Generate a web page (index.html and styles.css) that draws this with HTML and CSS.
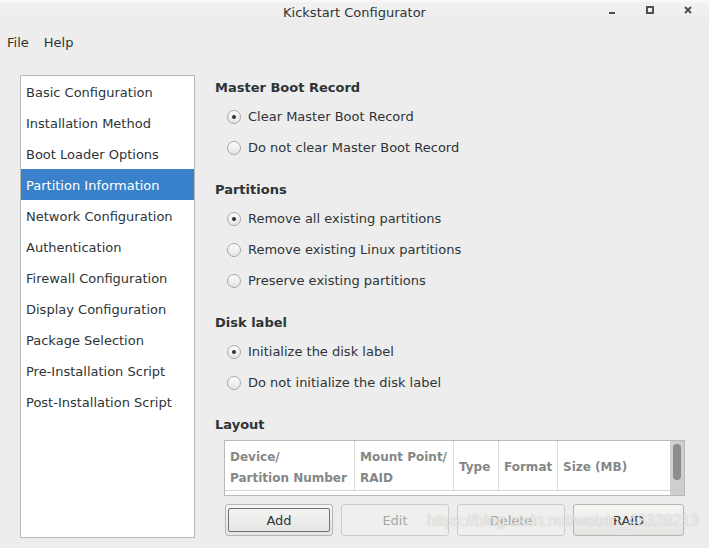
FILE: index.html
```html
<!DOCTYPE html>
<html>
<head>
<meta charset="utf-8">
<link rel="stylesheet" href="styles.css">
</head>
<body>
<div class="window">
  <div class="titlebar">
    <div class="title">Kickstart Configurator</div>
    <div class="controls">
      <svg class="ctl" width="8" height="8" viewBox="0 0 8 8"><rect x="1" y="6" width="6" height="2" fill="#4b5152"/></svg>
      <svg class="ctl" width="8" height="8" viewBox="0 0 8 8"><rect x="1" y="1" width="6" height="6" fill="none" stroke="#4b5152" stroke-width="2"/></svg>
      <svg class="ctl" width="8" height="8" viewBox="0 0 8 8"><path d="M1 1 L7 7 M7 1 L1 7" stroke="#4b5152" stroke-width="2"/></svg>
    </div>
  </div>
  <div class="menubar">
    <span class="menu">File</span>
    <span class="menu">Help</span>
  </div>
  <div class="main">
    <ul class="sidebar">
      <li>Basic Configuration</li>
      <li>Installation Method</li>
      <li>Boot Loader Options</li>
      <li class="selected">Partition Information</li>
      <li>Network Configuration</li>
      <li>Authentication</li>
      <li>Firewall Configuration</li>
      <li>Display Configuration</li>
      <li>Package Selection</li>
      <li>Pre-Installation Script</li>
      <li>Post-Installation Script</li>
    </ul>
    <div class="content">
      <section class="group">
        <h3>Master Boot Record</h3>
        <div class="radio"><span class="dot on"></span>Clear Master Boot Record</div>
        <div class="radio"><span class="dot"></span>Do not clear Master Boot Record</div>
      </section>
      <section class="group">
        <h3>Partitions</h3>
        <div class="radio"><span class="dot on"></span>Remove all existing partitions</div>
        <div class="radio"><span class="dot"></span>Remove existing Linux partitions</div>
        <div class="radio"><span class="dot"></span>Preserve existing partitions</div>
      </section>
      <section class="group">
        <h3>Disk label</h3>
        <div class="radio"><span class="dot on"></span>Initialize the disk label</div>
        <div class="radio"><span class="dot"></span>Do not initialize the disk label</div>
      </section>
      <section class="group layout">
        <h3>Layout</h3>
        <div class="table">
          <div class="thead">
            <div class="th c1">Device/<br>Partition Number</div>
            <div class="th c2">Mount Point/<br>RAID</div>
            <div class="th c3">Type</div>
            <div class="th c4">Format</div>
            <div class="th c5">Size (MB)</div>
          </div>
          <div class="scroll"><div class="thumb"></div></div>
        </div>
        <div class="buttons">
          <button class="btn focus"><span>Add</span></button>
          <button class="btn disabled"><span>Edit</span></button>
          <button class="btn disabled"><span>Delete</span></button>
          <button class="btn wide"><span>RAID</span></button>
        </div>
      </section>
    </div>
  </div>
  <div class="watermark">https://blog.csdn.net/weixin_43328213</div>
</div>
</body>
</html>
```
FILE: styles.css
```css
* { box-sizing: border-box; }
html, body { margin: 0; padding: 0; }
body {
  width: 709px;
  height: 548px;
  background: #ededed;
  font-family: "DejaVu Sans", sans-serif;
  font-size: 13px;
  color: #2e3436;
  overflow: hidden;
}
.window { position: relative; width: 709px; height: 548px; }
.titlebar {
  height: 23px;
  position: relative;
  background: linear-gradient(#f2f2f2, #ececec);
  border-top: 2px solid #f8f8f8;
  display: flex;
  align-items: center;
  justify-content: center;
}
.title { font-size: 13px; color: #2e3436; line-height: 18px; }
.controls {
  position: absolute;
  right: 17px;
  top: 4px;
  display: flex;
  gap: 30px;
}
.ctl { display: block; }
.menubar {
  height: 38px;
  display: flex;
  align-items: center;
  padding-left: 7px;
  gap: 15px;
}
.menu { font-size: 13px; color: #2e3436; }
.main {
  display: flex;
  padding-left: 20px;
  padding-top: 14px;
}
.sidebar {
  list-style: none;
  margin: 0;
  padding: 0;
  width: 175px;
  height: 463px;
  background: #fff;
  border: 1px solid #b9b9b6;
}
.sidebar li {
  height: 31px;
  line-height: 31px;
  padding-top: 1px;
  padding-left: 5px;
  white-space: nowrap;
  color: #2e3436;
}
.sidebar li.selected { background: #3a81cc; color: #fff; }
.content {
  margin-left: 20px;
  padding-top: 3px;
  width: 470px;
}
.group { margin-bottom: 17px; }
.group h3 {
  margin: 0 0 3px 0;
  height: 20px;
  line-height: 20px;
  font-size: 13px;
  font-weight: bold;
  color: #2e3436;
}
.radio {
  height: 31px;
  display: flex;
  align-items: center;
  padding-left: 12px;
  white-space: nowrap;
}
.dot {
  width: 14px;
  height: 14px;
  border-radius: 50%;
  border: 1px solid #a7a7a5;
  background: linear-gradient(#fdfdfd, #e4e4e2);
  margin-right: 7px;
  display: flex;
  align-items: center;
  justify-content: center;
}
.dot.on::after {
  content: "";
  width: 4px;
  height: 4px;
  border-radius: 50%;
  background: #2e3436;
}
.group.layout h3 { margin-bottom: 5px; }
.table {
  margin-left: 9px;
  width: 461px;
  height: 56px;
  border: 1px solid #b9b9b6;
  background: #fff;
  position: relative;
  display: flex;
}
.thead {
  display: flex;
  height: 50px;
  border-bottom: 1px solid #d4d4d2;
  width: 445px;
}
.th {
  font-weight: bold;
  color: #858786;
  font-size: 12px;
  line-height: 21px;
  padding: 4px 5px 0 5px;
  border-right: 1px solid #dcdcda;
  display: flex;
  align-items: center;
  white-space: nowrap;
}
.th.c1 { width: 130px; }
.th.c2 { width: 99px; }
.th.c3 { width: 45px; }
.th.c4 { width: 59px; }
.th.c5 { width: 112px; border-right: none; }
.scroll {
  width: 14px;
  height: 54px;
  background: #cecece;
  margin-left: auto;
  position: relative;
}
.thumb {
  position: absolute;
  left: 3px;
  top: 3px;
  width: 8px;
  height: 36px;
  border-radius: 4px;
  background: #8b8e8f;
}
.buttons {
  display: flex;
  gap: 8px;
  margin-top: 8px;
  margin-left: 10px;
}
.btn {
  width: 108px;
  height: 32px;
  padding: 0;
  border: 1px solid #b5b5b2;
  border-radius: 3px;
  background: linear-gradient(#f6f6f5, #e4e4e2);
  font-family: "DejaVu Sans", sans-serif;
  font-size: 13px;
  color: #2e3436;
  display: flex;
  align-items: center;
  justify-content: center;
}
.btn.focus span {
  width: 102px;
  height: 24px;
  border: 1px solid #6f7170;
  border-radius: 2px;
  display: flex;
  align-items: center;
  justify-content: center;
}
.btn.disabled {
  background: #efefee;
  border-color: #cdcdcb;
  color: #a4a6a5;
}
.btn.wide { width: 111px; }
.watermark {
  position: absolute;
  left: 427px;
  top: 512px;
  font-family: "Liberation Sans", sans-serif;
  font-size: 16px;
  color: rgba(255,255,255,0.75);
  text-shadow: 0 0 1px rgba(120,120,120,0.6);
  white-space: nowrap;
}
```
